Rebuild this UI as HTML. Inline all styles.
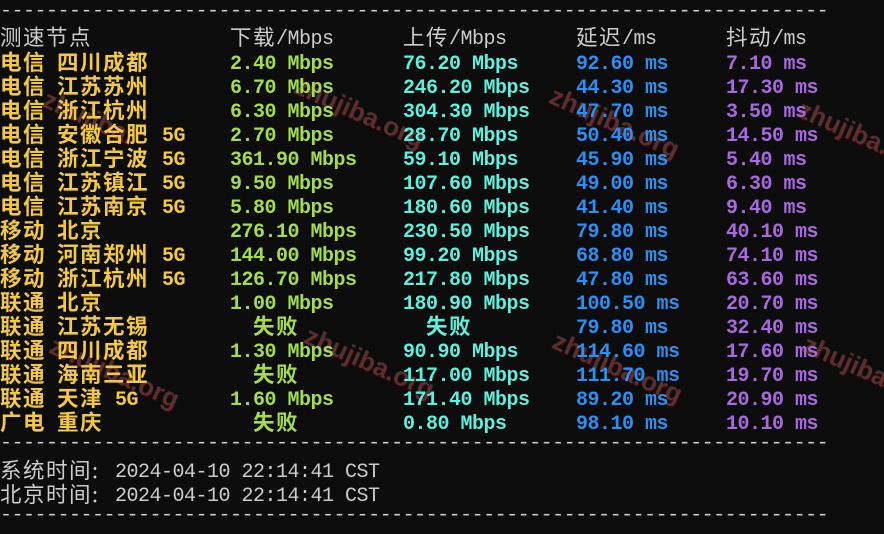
<!DOCTYPE html>
<html><head><meta charset="utf-8"><style>
body{margin:0;width:884px;height:534px;background:#0c0c0c;overflow:hidden;position:relative;font-family:"Liberation Mono","Noto Sans CJK SC",monospace;font-size:20px;letter-spacing:-0.5px}
.l{position:absolute;left:0;height:24px;line-height:24px;white-space:pre;width:884px}
.l span{position:absolute;top:3px}
.c{font-family:"Noto Sans CJK SC",sans-serif;font-size:21.5px;letter-spacing:1.5px;line-height:24px}
.l span.c{top:0}
.h{color:#cccccc}
.b{font-weight:bold}
.y{color:#f5c842}.g{color:#a3dc4f}.cy{color:#5ef0dc}.bl{color:#2b8ff5}.p{color:#a768e0}
.wm{position:absolute;color:rgba(120,90,90,0.5);font-family:"Liberation Sans",sans-serif;font-weight:bold;font-size:26px;letter-spacing:0;transform:rotate(24deg);text-shadow:1px 1px 1px rgba(120,0,0,.5)}
</style></head><body>
<div class="wm" style="left:290px;top:97px">zhujiba.org</div>
<div class="wm" style="left:545px;top:107px">zhujiba.org</div>
<div class="wm" style="left:795px;top:112px">zhujiba.</div>
<div class="wm" style="left:40px;top:102px">zhujiba.</div>
<div class="wm" style="left:45px;top:357px">zhujiba.org</div>
<div class="wm" style="left:300px;top:347px">zhujiba.org</div>
<div class="wm" style="left:548px;top:352px">zhujiba.org</div>
<div class="wm" style="left:800px;top:347px">zhujiba.</div>
<div class="l h" style="top:0px">------------------------------------------------------------------------</div>
<div class="l h" style="top:25px"><span class="c" style="left:0">测速节点</span><span class="c" style="left:230px">下载</span><span style="left:276px">/Mbps</span><span class="c" style="left:403px">上传</span><span style="left:449px">/Mbps</span><span class="c" style="left:576px">延迟</span><span style="left:622px">/ms</span><span class="c" style="left:726px">抖动</span><span style="left:772px">/ms</span></div>
<div class="l b" style="top:50px"><span class="y c" style="left:0">电信</span><span class="y c" style="left:57px">四川成都</span><span class="g" style="left:230px">2.40 Mbps</span><span class="cy" style="left:403px">76.20 Mbps</span><span class="bl" style="left:576px">92.60 ms</span><span class="p" style="left:726px">7.10 ms</span></div>
<div class="l b" style="top:74px"><span class="y c" style="left:0">电信</span><span class="y c" style="left:57px">江苏苏州</span><span class="g" style="left:230px">6.70 Mbps</span><span class="cy" style="left:403px">246.20 Mbps</span><span class="bl" style="left:576px">44.30 ms</span><span class="p" style="left:726px">17.30 ms</span></div>
<div class="l b" style="top:98px"><span class="y c" style="left:0">电信</span><span class="y c" style="left:57px">浙江杭州</span><span class="g" style="left:230px">6.30 Mbps</span><span class="cy" style="left:403px">304.30 Mbps</span><span class="bl" style="left:576px">47.70 ms</span><span class="p" style="left:726px">3.50 ms</span></div>
<div class="l b" style="top:122px"><span class="y c" style="left:0">电信</span><span class="y c" style="left:57px">安徽合肥</span><span class="y" style="left:162px">5G</span><span class="g" style="left:230px">2.70 Mbps</span><span class="cy" style="left:403px">28.70 Mbps</span><span class="bl" style="left:576px">50.40 ms</span><span class="p" style="left:726px">14.50 ms</span></div>
<div class="l b" style="top:146px"><span class="y c" style="left:0">电信</span><span class="y c" style="left:57px">浙江宁波</span><span class="y" style="left:162px">5G</span><span class="g" style="left:230px">361.90 Mbps</span><span class="cy" style="left:403px">59.10 Mbps</span><span class="bl" style="left:576px">45.90 ms</span><span class="p" style="left:726px">5.40 ms</span></div>
<div class="l b" style="top:170px"><span class="y c" style="left:0">电信</span><span class="y c" style="left:57px">江苏镇江</span><span class="y" style="left:162px">5G</span><span class="g" style="left:230px">9.50 Mbps</span><span class="cy" style="left:403px">107.60 Mbps</span><span class="bl" style="left:576px">49.00 ms</span><span class="p" style="left:726px">6.30 ms</span></div>
<div class="l b" style="top:194px"><span class="y c" style="left:0">电信</span><span class="y c" style="left:57px">江苏南京</span><span class="y" style="left:162px">5G</span><span class="g" style="left:230px">5.80 Mbps</span><span class="cy" style="left:403px">180.60 Mbps</span><span class="bl" style="left:576px">41.40 ms</span><span class="p" style="left:726px">9.40 ms</span></div>
<div class="l b" style="top:218px"><span class="y c" style="left:0">移动</span><span class="y c" style="left:57px">北京</span><span class="g" style="left:230px">276.10 Mbps</span><span class="cy" style="left:403px">230.50 Mbps</span><span class="bl" style="left:576px">79.80 ms</span><span class="p" style="left:726px">40.10 ms</span></div>
<div class="l b" style="top:242px"><span class="y c" style="left:0">移动</span><span class="y c" style="left:57px">河南郑州</span><span class="y" style="left:162px">5G</span><span class="g" style="left:230px">144.00 Mbps</span><span class="cy" style="left:403px">99.20 Mbps</span><span class="bl" style="left:576px">68.80 ms</span><span class="p" style="left:726px">74.10 ms</span></div>
<div class="l b" style="top:266px"><span class="y c" style="left:0">移动</span><span class="y c" style="left:57px">浙江杭州</span><span class="y" style="left:162px">5G</span><span class="g" style="left:230px">126.70 Mbps</span><span class="cy" style="left:403px">217.80 Mbps</span><span class="bl" style="left:576px">47.80 ms</span><span class="p" style="left:726px">63.60 ms</span></div>
<div class="l b" style="top:290px"><span class="y c" style="left:0">联通</span><span class="y c" style="left:57px">北京</span><span class="g" style="left:230px">1.00 Mbps</span><span class="cy" style="left:403px">180.90 Mbps</span><span class="bl" style="left:576px">100.50 ms</span><span class="p" style="left:726px">20.70 ms</span></div>
<div class="l b" style="top:314px"><span class="y c" style="left:0">联通</span><span class="y c" style="left:57px">江苏无锡</span><span class="g c" style="left:253px">失败</span><span class="cy c" style="left:426px">失败</span><span class="bl" style="left:576px">79.80 ms</span><span class="p" style="left:726px">32.40 ms</span></div>
<div class="l b" style="top:338px"><span class="y c" style="left:0">联通</span><span class="y c" style="left:57px">四川成都</span><span class="g" style="left:230px">1.30 Mbps</span><span class="cy" style="left:403px">90.90 Mbps</span><span class="bl" style="left:576px">114.60 ms</span><span class="p" style="left:726px">17.60 ms</span></div>
<div class="l b" style="top:362px"><span class="y c" style="left:0">联通</span><span class="y c" style="left:57px">海南三亚</span><span class="g c" style="left:253px">失败</span><span class="cy" style="left:403px">117.00 Mbps</span><span class="bl" style="left:576px">111.70 ms</span><span class="p" style="left:726px">19.70 ms</span></div>
<div class="l b" style="top:386px"><span class="y c" style="left:0">联通</span><span class="y c" style="left:57px">天津</span><span class="y" style="left:115px">5G</span><span class="g" style="left:230px">1.60 Mbps</span><span class="cy" style="left:403px">171.40 Mbps</span><span class="bl" style="left:576px">89.20 ms</span><span class="p" style="left:726px">20.90 ms</span></div>
<div class="l b" style="top:410px"><span class="y c" style="left:0">广电</span><span class="y c" style="left:57px">重庆</span><span class="g c" style="left:253px">失败</span><span class="cy" style="left:403px">0.80 Mbps</span><span class="bl" style="left:576px">98.10 ms</span><span class="p" style="left:726px">10.10 ms</span></div>
<div class="l h" style="top:432px">------------------------------------------------------------------------</div>
<div class="l h" style="top:458px"><span class="c" style="left:0">系统时间:</span><span style="left:115px">2024-04-10 22:14:41 CST</span></div>
<div class="l h" style="top:482px"><span class="c" style="left:0">北京时间:</span><span style="left:115px">2024-04-10 22:14:41 CST</span></div>
<div class="l h" style="top:504px">------------------------------------------------------------------------</div>
</body></html>
